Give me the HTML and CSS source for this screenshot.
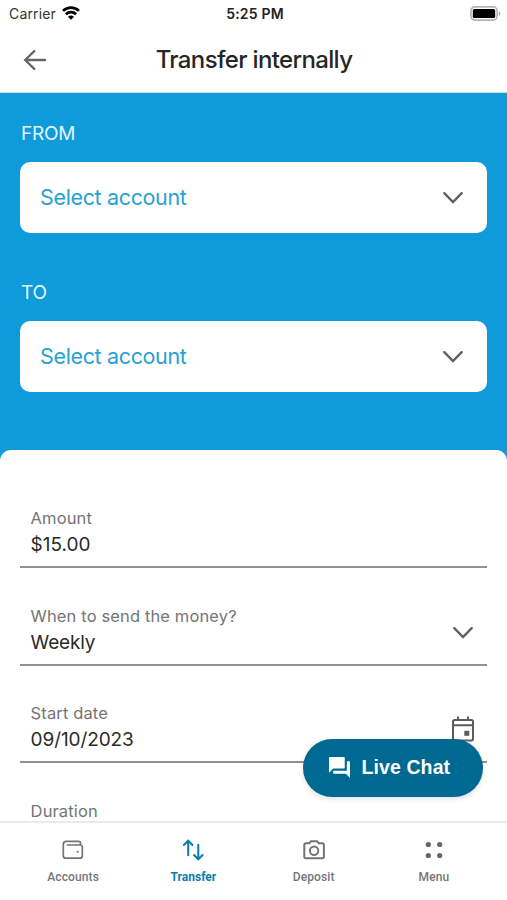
FILE: index.html
```html
<!DOCTYPE html>
<html lang="en">
<head>
<meta charset="utf-8">
<meta name="viewport" content="width=device-width, initial-scale=1">
<title>Transfer internally</title>
<link rel="stylesheet" href="styles.css">
</head>
<body>
<div class="screen">
  <div class="status">
    <div class="carrier"><span class="carrier-name">Carrier</span>
      <svg class="wifi" width="18" height="14" viewBox="0 0 18 14" fill="none" stroke="#000" stroke-width="2.7"><path d="M1 4.9C5.5.5 12.5.5 17 4.9M3.9 8.200C6.8 5.500 11.200 5.500 14.100 8.200"/><path d="M9 13.800 5.900 10.700C7.600 9.100 10.400 9.100 12.100 10.700Z" fill="#000" stroke="none"/></svg>
    </div>
    <span class="time">5:25 PM</span>
    <svg class="battery" width="31" height="15" viewBox="0 0 31 15"><rect x=".9" y=".9" width="26.200" height="13.200" rx="4" fill="#fff" stroke="#b5b5b5" stroke-width="1.700"/><rect x="2.800" y="2.900" width="22.400" height="9.200" rx="1.500" fill="#000"/><path d="M28.800 5.200c2 .8 2 3.800 0 4.600z" fill="#aaa"/></svg>
  </div>
  <header class="header">
    <svg class="back" width="24" height="22" viewBox="0 0 24 22" fill="none" stroke="#666" stroke-width="2.300" stroke-linecap="round"><path d="M22 11H2.500M11.300 2.100 2.200 11l9.100 8.900"/></svg>
    <h1 class="title">Transfer internally</h1>
  </header>
  <main class="main">
    <section class="accounts">
      <h2 class="caption from">FROM</h2>
      <div class="select"><span class="select-text">Select account</span><svg class="chevron" width="22" height="13" viewBox="0 0 22 13"><path d="m2.300 2.200 8.700 8.800 8.700-8.800"/></svg></div>
      <h2 class="caption to">TO</h2>
      <div class="select"><span class="select-text">Select account</span><svg class="chevron" width="22" height="13" viewBox="0 0 22 13"><path d="m2.300 2.200 8.700 8.800 8.700-8.800"/></svg></div>
    </section>
    <section class="form">
      <div class="field"><div><div class="label">Amount</div><div class="value">$15.00</div></div></div>
      <div class="field"><div><div class="label">When to send the money?</div><div class="value weekly">Weekly</div></div><svg class="chevron" width="22" height="13" viewBox="0 0 22 13"><path d="m2.300 2.200 8.700 8.800 8.700-8.800"/></svg></div>
      <div class="field"><div><div class="label">Start date</div><div class="value date">09/10/2023</div></div><svg class="calendar" width="22" height="26" viewBox="0 0 22 26" fill="none" stroke="#5c5c5c" stroke-width="2"><rect x="1" y="4" width="20" height="20.500" rx="1.800"/><path d="M1 9.300h20M6 .5V4M16 .5V4"/><rect x="12.300" y="14.800" width="5" height="5" fill="#5c5c5c" stroke="none"/></svg></div>
      <div class="field"><div><div class="label">Duration</div></div></div>
    </section>
  </main>
  <nav class="tabs">
    <div class="tab"><svg width="24" height="24" viewBox="0 0 24 24" fill="none" stroke="#747474" stroke-width="1.700"><path d="M19.500 7V5.100Q19.500 3.300 17.600 3.300H5.200Q2.300 3.300 2.300 6.200V17.700Q2.300 20.200 4.800 20.200H18.800Q21.300 20.200 21.300 17.700V9.200Q21.300 7 18.900 7H5.800"/><circle cx="16.700" cy="13.800" r="1.100" fill="#747474" stroke="none"/></svg><span class="tab-text">Accounts</span></div>
    <div class="tab active"><svg width="24" height="24" viewBox="0 0 24 24" fill="none" stroke="#087eae" stroke-width="2" stroke-linecap="round"><path d="M7.200 17.200V3.300M2.900 7l4.300-4.300L11.500 7M17.300 6.800v13.900M13 17l4.300 4.300 4.300-4.300"/></svg><span class="tab-text">Transfer</span></div>
    <div class="tab"><svg width="24" height="24" viewBox="0 0 24 24" fill="none" stroke="#747474" stroke-width="2"><path d="M3.900 5.200h3.500L9.100 3.200h6l1.700 2h3.500q1.600 0 1.600 1.500v12q0 1.500-1.600 1.500H3.900q-1.600 0-1.600-1.500v-12q0-1.500 1.600-1.500Z"/><circle cx="12.100" cy="12.700" r="4.200"/></svg><span class="tab-text">Deposit</span></div>
    <div class="tab"><svg width="24" height="24" viewBox="0 0 24 24" fill="#666"><circle cx="6.300" cy="6.500" r="2.600"/><circle cx="17.700" cy="6.500" r="2.600"/><circle cx="6.300" cy="17.500" r="2.600"/><circle cx="17.700" cy="17.500" r="2.600"/></svg><span class="tab-text">Menu</span></div>
  </nav>
  <div class="chat"><svg width="21" height="21" viewBox="2 2 20 20" fill="#fff"><path d="M21 6h-2v9H6v2c0 .55.45 1 1 1h11l4 4V7c0-.55-.45-1-1-1zm-4 6V3c0-.55-.45-1-1-1H3c-.55 0-1 .45-1 1v14l4-4h10c.55 0 1-.45 1-1z"/></svg><span>Live Chat</span></div>
</div>
</body>
</html>
```
FILE: styles.css
```css
* { box-sizing: border-box; }
body { margin: 0; background: #fff; font-family: Inter, "Liberation Sans", sans-serif; }
.screen { position: relative; width: 507px; height: 900px; overflow: hidden; display: flex; flex-direction: column; white-space: nowrap; }
.status { height: 28px; flex: none; display: grid; grid-template-columns: 1fr auto 1fr; align-items: center; padding: 0 6px 0 9px; }
.carrier { display: flex; align-items: center; gap: 6px; }
.carrier-name { font-size: 14px; letter-spacing: .15px; color: #333; margin-top: -1px; }
.wifi { margin-top: -2px; }
.time { font-size: 14px; font-weight: 600; color: #222; letter-spacing: .2px; margin-top: -1px; }
.battery { justify-self: end; margin-top: -2px; }
.header { height: 65px; flex: none; border-bottom: 1px solid #c9dce6; display: grid; grid-template-columns: 24px 1fr 24px; align-items: center; padding: 0 23px 1px 24px; }
.back { margin: 1px 0 0 -1px; }
.title { margin: 0; text-align: center; font-size: 24px; font-weight: 500; color: #262626; letter-spacing: -.65px; }
.main { flex: 1; min-height: 0; overflow: hidden; background: #0f9ada; }
.accounts { height: 357px; padding: 30px 20px 0; }
.caption { margin: 0; padding-left: 1px; height: 39px; line-height: 21px; font-size: 19px; letter-spacing: -.2px; font-weight: 400; color: #e2f6ff; }
.to { margin-top: 49px; }
.select { height: 71px; background: #fff; border-radius: 10px; padding: 0 23px 0 20px; display: flex; align-items: center; justify-content: space-between; }
.select-text { font-size: 21.5px; letter-spacing: -.35px; margin-top: -1px; color: #2a9fd2; }
.chevron { fill: none; stroke: #606060; stroke-width: 2.4; stroke-linecap: round; }
.form { height: 500px; background: #fff; border-radius: 11px 11px 0 0; padding: 20.4px 20px 0; }
.field { height: 97.7px; border-bottom: 2px solid #919191; padding: 35.600px 13px 0 10.600px; display: flex; justify-content: space-between; }
.field .chevron { margin-top: 22px; }
.label { font-size: 16.500px; letter-spacing: .13px; line-height: 24px; color: #757575; }
.value { font-size: 19px; line-height: 29px; color: #2a2a2a; }
.weekly { letter-spacing: -.2px; }
.date { letter-spacing: -.1px; }
.calendar { margin-top: 15px; }
.tabs { height: 79px; flex: none; border-top: 2px solid #eaeaea; background: #fff; display: grid; grid-template-columns: repeat(4, 1fr); padding: 0 13px; }
.tab { display: flex; flex-direction: column; align-items: center; padding-top: 15px; }
.tab-text { font-family: Roboto, sans-serif; font-size: 12px; line-height: 16px; margin-top: 7px; font-weight: 500; color: #767676; letter-spacing: .1px; }
.active .tab-text { color: #087eae; font-weight: 700; letter-spacing: 0; }
.chat { position: absolute; left: 303px; top: 739px; width: 180px; height: 58px; border-radius: 29px; background: #006991; color: #fff; display: flex; align-items: center; padding: 0 0 1px 26px; gap: 11.500px; font: 700 19.500px "Liberation Sans", sans-serif; letter-spacing: .1px; box-shadow: 0 2px 5px rgba(0,0,0,.12); }
```
